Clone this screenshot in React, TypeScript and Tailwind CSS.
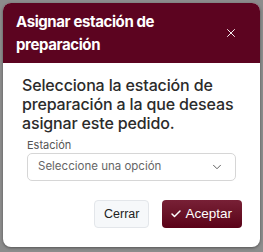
import { X, ChevronDown, Check } from 'lucide-react'

export default function App() {
  return (
    <div className="w-[263px] h-[252px] bg-[#8c8c8c] p-[3px] pb-[5px] font-['Inter',sans-serif]">
      <div className="h-full flex flex-col bg-white rounded-[8px] overflow-hidden shadow-[0_1px_3px_rgba(0,0,0,0.4)]">
        {/* Header */}
        <div className="h-[60px] shrink-0 bg-[#5c0420] flex items-center justify-between pl-[13px] pr-[22px]">
          <h2 className="text-white text-[15px] font-bold leading-[23px] tracking-[-0.4px] w-[190px]">
            Asignar estación de preparación
          </h2>
          <X className="w-[14px] h-[14px] text-white" strokeWidth={1.6} />
        </div>

        {/* Body */}
        <div className="px-[19px] pt-[13px]">
          <p className="text-[#2b2b2b] text-[16px] font-medium leading-[19px] tracking-[-0.15px]">
            Selecciona la estación de preparación a la que deseas asignar este pedido.
          </p>
          <div className="px-[5px] mt-[5px]">
            <label className="block text-[#555] text-[11px] leading-[14px]">Estación</label>
            <div className="mt-[1px] h-[28px] border border-[#d6d6d6] rounded-[5px] flex items-center justify-between pl-[10px] pr-[11px]">
              <span className="text-[#666] text-[11.5px]">Seleccione una opción</span>
              <ChevronDown className="w-[14px] h-[14px] text-[#555]" strokeWidth={1.6} />
            </div>
          </div>
        </div>

        {/* Footer */}
        <div className="flex justify-end gap-[13px] pr-[18px] mt-[19px]">
          <button className="h-[28px] px-[9px] rounded-[4px] bg-[#f6f8fa] border border-[#e3e6ea] text-[#222] text-[12.5px] font-['Liberation_Sans',sans-serif]">
            Cerrar
          </button>
          <button className="h-[28px] pl-[8px] pr-[10px] rounded-[4px] bg-gradient-to-b from-[#782036] to-[#5a0218] text-white text-[13.5px] font-medium flex items-center gap-[3px] font-['Liberation_Sans',sans-serif]">
            <Check className="w-[12px] h-[12px]" strokeWidth={3} />
            Aceptar
          </button>
        </div>
      </div>
    </div>
  )
}
